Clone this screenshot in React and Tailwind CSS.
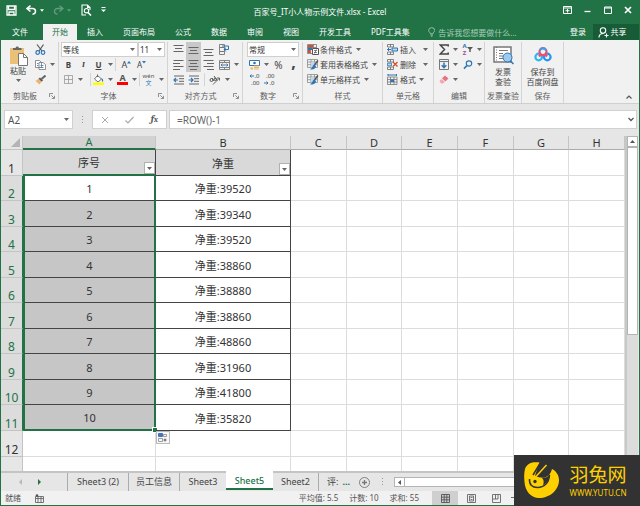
import { useState } from 'react';
import clsx from 'clsx';

const MENU = ['插入', '页面布局', '公式', '数据', '审阅', '视图', '开发工具', 'PDF工具集'];

const COLUMNS = ['A', 'B', 'C', 'D', 'E', 'F', 'G', 'H'];
const EMPTY = ['C', 'D', 'E', 'F', 'G', 'H'];

const WEIGHTS = [39520, 39340, 39520, 38860, 38880, 38860, 48860, 31960, 41800, 35820];

const SHEETS = [
  { name: 'Sheet3 (2)', width: 'w-[61px]' },
  { name: '员工信息', width: 'w-[51px]' },
  { name: 'Sheet3', width: 'w-[46px]' },
  { name: 'Sheet5', width: 'w-[47px]' },
  { name: 'Sheet2', width: 'w-[46px]' },
];

function Caret({ className }) {
  return (
    <svg viewBox="0 0 5 3" className={clsx('h-[3px] w-[5px] shrink-0', className)} fill="#666">
      <path d="M0 0h5L2.5 3z" />
    </svg>
  );
}

function Tool({ label, width = 'w-[15px]', active, children }) {
  return (
    <button
      type="button"
      aria-label={label}
      className={clsx('flex h-[15px] shrink-0 items-center justify-center', width, active && 'bg-[#c8c8c8]')}
    >
      {children}
    </button>
  );
}

function DropButton({ label }) {
  return (
    <button type="button" aria-label={label} className="flex h-[15px] w-[9px] shrink-0 items-center justify-center">
      <Caret />
    </button>
  );
}

function Divider() {
  return <span className="h-[13px] w-px shrink-0 bg-[#d4d4d4]" />;
}

function Combo({ label, width, value }) {
  return (
    <div className={clsx('relative', width)}>
      <select
        aria-label={label}
        className="h-[15px] w-full appearance-none border border-[#cfcfcf] bg-white pl-px leading-[13px] text-[#333]"
      >
        <option>{value}</option>
      </select>
      <Caret className="pointer-events-none absolute top-[6px] right-[3px]" />
    </div>
  );
}

function Group({ title, width, launcher, children }) {
  return (
    <section className={clsx('flex shrink-0 flex-col border-r border-[#d4d4d4]', width)}>
      <div className="h-[46px]">{children}</div>
      <div className="flex h-[15px] items-center">
        <span className="flex-1 text-center whitespace-nowrap text-[#5c5c5c]">{title}</span>
        {launcher && (
          <button type="button" aria-label={`${title}设置`} className="mr-[3px] flex h-[8px] w-[6px] items-center">
            <svg viewBox="0 0 6 6" className="h-[6px] w-[6px]" fill="none" stroke="#777" strokeWidth="0.8">
              <path d="M0.5 4V0.5H4M2.3 2.3l3 3M5.5 2.8v2.7H2.8" />
            </svg>
          </button>
        )}
      </div>
    </section>
  );
}

/* Lines used by the six alignment buttons */
function Lines({ at, side = 'center' }) {
  const x = { left: 0, center: 2, right: 4 }[side];
  return (
    <svg viewBox="0 0 11 12" className="h-[12px] w-[11px]" stroke="#666" strokeWidth="1">
      {at.map((y, i) => (
        <path key={y} d={i % 2 === 1 ? `M${x} ${y}h7` : `M0.5 ${y}h10`} />
      ))}
    </svg>
  );
}

function Indent({ flip }) {
  return (
    <svg viewBox="0 0 12 10" className="h-[10px] w-[12px]" fill="none">
      <path d="M1 1h10M6 3.7h5M6 6.3h5M1 9h10" stroke="#666" />
      <path d={flip ? 'M0.5 5h4M3 3l2 2-2 2' : 'M1 5h4M3 3L1 5l2 2'} stroke="#2f75b5" strokeWidth="1.2" />
    </svg>
  );
}

function TableBrush() {
  return (
    <svg viewBox="0 0 12 11" className="h-[11px] w-[12px] shrink-0" fill="none">
      <path d="M0.5 0.5h10v8h-10zM0.5 3h10M0.5 5.7h10M4 0.5v8M7.5 0.5v8" stroke="#8a8a8a" strokeWidth="0.8" />
      <path d="M4 3h3.5v5.5H4z" fill="#bdd7ee" />
      <path d="M11 1.5L7.5 6" stroke="#555" strokeWidth="1.5" />
      <path d="M7.5 5.5C5 6 6.5 8.5 3 10.2c3.5 .7 5.8 -.7 6 -3z" fill="#2f75b5" />
    </svg>
  );
}

function TitleBar() {
  return (
    <div className="relative flex h-[24px] items-center justify-between text-white">
      <div className="mb-[4px] flex items-center">
        <button type="button" aria-label="保存" className="ml-[5px]">
          <svg viewBox="0 0 11 11" className="h-[11px] w-[11px]" fill="none" stroke="#fff" strokeWidth="1.3">
            <path d="M1 1h9v9H1zM2.5 1v3.5h6V1M3 10V7h5v3" />
          </svg>
        </button>
        <button type="button" aria-label="撤销" className="ml-[9px] flex items-center gap-[3px]">
          <svg viewBox="0 0 11 10" className="h-[10px] w-[11px]" fill="none" stroke="#fff" strokeWidth="1.5">
            <path d="M4.5 0.7L1 3.5l3.5 3M1.5 3.5h5c4 0 4 5.5 0 5.7" />
          </svg>
          <svg viewBox="0 0 5 3" className="h-[3px] w-[4px]" fill="#fff"><path d="M0 0h5L2.5 3z" /></svg>
        </button>
        <button type="button" aria-label="恢复" className="ml-[9px] flex items-center gap-[3px] opacity-30">
          <svg viewBox="0 0 11 10" className="h-[10px] w-[11px]" fill="none" stroke="#fff" strokeWidth="1.3">
            <path d="M6.5 0.7L10 3.5l-3.5 3M9.5 3.5h-5c-4 0-4 5.5 0 5.7" />
          </svg>
          <svg viewBox="0 0 5 3" className="h-[3px] w-[4px]" fill="#fff"><path d="M0 0h5L2.5 3z" /></svg>
        </button>
        <button type="button" aria-label="打印预览" className="ml-[10px]">
          <svg viewBox="0 0 11 12" className="h-[12px] w-[11px]" fill="none" stroke="#fff" strokeWidth="1.1">
            <path d="M5 11H1V1h5.5L9 3.5V6M6.5 1v2.5H9" />
            <circle cx="5.5" cy="6.7" r="2.2" />
            <path d="M7 8.5l3 3" strokeWidth="1.6" />
          </svg>
        </button>
        <button type="button" aria-label="自定义快速访问工具栏" className="ml-[9px]">
          <svg viewBox="0 0 5 6" className="h-[6px] w-[5px]" fill="#fff"><path d="M0.5 0h4v1h-4zM0 2.5h5L2.5 5z" /></svg>
        </button>
      </div>
      <h1 className="absolute inset-x-0 top-[6px] text-center leading-[12px]">百家号_IT小人物示例文件.xlsx - Excel</h1>
      <div className="mb-[4px] flex items-center pr-[7px]">
        <button type="button" aria-label="功能区显示选项" className="mr-[12px]">
          <svg viewBox="0 0 9 8" className="h-[8px] w-[9px]" fill="none" stroke="#fff">
            <path d="M0.5 0.5h8v7h-8zM0.5 2h8M4.5 3v3.5M2.5 4.7h4" />
          </svg>
        </button>
        <button type="button" aria-label="最小化" className="mr-[13px]">
          <svg viewBox="0 0 7 8" className="h-[8px] w-[7px]" stroke="#fff" strokeWidth="1.3"><path d="M0.5 5.5h6" /></svg>
        </button>
        <button type="button" aria-label="最大化" className="mr-[12px]">
          <svg viewBox="0 0 8 8" className="h-[8px] w-[8px]" fill="none" stroke="#fff"><path d="M0.5 1h7v6.5h-7zM0.5 2h7" /></svg>
        </button>
        <button type="button" aria-label="关闭">
          <svg viewBox="0 0 8 8" className="h-[8px] w-[8px]" stroke="#fff" strokeWidth="1.7"><path d="M1 1l6 6M7 1L1 7" /></svg>
        </button>
      </div>
    </div>
  );
}

function MenuBar() {
  return (
    <nav className="flex h-[16px] text-white">
      <button type="button" className="w-[42px] pr-[4px]">文件</button>
      <button type="button" className="w-[34px] bg-[#f1f1f1] text-[#217346]">开始</button>
      <div className="flex">
        {MENU.map((name) => (
          <button key={name} type="button" className="px-[10px] whitespace-nowrap">{name}</button>
        ))}
      </div>
      <label className="flex flex-1 items-center gap-[3px] pl-[8px]">
        <svg viewBox="0 0 8 10" className="h-[10px] w-[8px]" fill="none" stroke="#a9cdb8" strokeWidth="0.9">
          <path d="M2.7 7c0-1.5-2-2-2-3.7a3.3 3 0 0 1 6.6 0C7.3 5 5.3 5.5 5.3 7zM2.7 8.3h2.6M3.2 9.5h1.6" />
        </svg>
        <input
          type="text"
          aria-label="告诉我您想要做什么"
          placeholder="告诉我您想要做什么..."
          className="h-[14px] w-full min-w-0 bg-transparent text-[#a9cdb8] outline-none placeholder:text-[#a9cdb8]"
        />
      </label>
      <button type="button" className="px-[7px]">登录</button>
      <button type="button" className="flex w-[46px] items-center justify-center gap-[2px] bg-[#185c37] pr-[8px]">
        <svg viewBox="0 0 11 11" className="h-[11px] w-[11px]" fill="none" stroke="#fff" strokeWidth="1.1">
          <circle cx="5" cy="3.5" r="2.7" />
          <path d="M1 10.5C1 7.5 3 6.5 5.5 6.5M8.5 6.5v4M6.5 8.5h4" />
        </svg>
        共享
      </button>
    </nav>
  );
}

function Ribbon() {
  return (
    <div className="flex h-[64px] border-b border-[#d0d0d0] bg-[#f1f1f1] pt-[2px]">
      <Group title="剪贴板" width="w-[58px]" launcher>
        <div className="flex">
          <button type="button" className="flex w-[32px] flex-col items-center pt-[3px] pl-[2px] leading-[10px] text-[#444]">
            <svg viewBox="0 0 19 21" className="h-[21px] w-[19px]">
              <path d="M1 3h14v16H1z" fill="#ebc177" />
              <path d="M4 5V3h2.500a1.800 1.800 0 0 1 3.500 0h2.500v2z" fill="#666" />
              <path d="M9.500 8.500h5l4 4v8h-9z" fill="#fff" stroke="#777" />
              <path d="M14.500 8.500v4h4" fill="none" stroke="#777" />
            </svg>
            粘贴
            <Caret className="mt-[3px]" />
          </button>
          <div className="flex flex-col">
            <Tool label="剪切">
              <svg viewBox="0 0 11 11" className="h-[11px] w-[11px]" fill="none">
                <path d="M2 0.5l5 6.5M8.5 0.5L4 7" stroke="#555" strokeWidth="1.2" />
                <circle cx="2.7" cy="8.5" r="1.8" stroke="#2f75b5" strokeWidth="1.2" />
                <circle cx="8" cy="8.5" r="1.8" stroke="#2f75b5" strokeWidth="1.2" />
              </svg>
            </Tool>
            <div className="flex">
              <Tool label="复制">
                <svg viewBox="0 0 11 10" className="h-[10px] w-[11px]" fill="#fff" stroke="#777" strokeWidth="0.8">
                  <path d="M0.5 0.5h4l2 2v5h-6zM4 2.5h4l2.5 2v5H4z" />
                  <path d="M5.5 5.5h3M5.5 7.5h3M2 3.5h1.5M2 5.5h1.5" stroke="#2f75b5" />
                </svg>
              </Tool>
              <DropButton label="复制选项" />
            </div>
            <Tool label="格式刷">
              <svg viewBox="0 0 11 10" className="h-[10px] w-[11px]">
                <path d="M10.5 0.5L6.5 4" stroke="#666" strokeWidth="2" />
                <path d="M5 2.5l3 3-1.5 1.3-3-3z" fill="#555" />
                <path d="M3.5 3.8l3 3-2 2.7L0.5 6z" fill="#edb56b" />
              </svg>
            </Tool>
          </div>
        </div>
      </Group>

      <Group title="字体" width="w-[109px]" launcher>
        <div className="flex pl-[2px]">
          <Combo label="字体" width="w-[77px]" value="等线" />
          <Combo label="字号" width="w-[27px]" value="11" />
        </div>
        <div className="flex items-center pl-[2px] text-[#444]">
          <Tool label="加粗"><span className="font-bold">B</span></Tool>
          <Tool label="倾斜"><span className="font-serif font-bold italic">I</span></Tool>
          <Tool label="下划线"><span className="font-bold underline">U</span></Tool>
          <DropButton label="下划线选项" />
          <Divider />
          <span className="w-[3px]" />
          <Tool label="增大字号">
            <span className="text-[9px]">A</span>
            <svg viewBox="0 0 4 8" className="h-[8px] w-[4px]" fill="#2f75b5"><path d="M0 2.5h4L2 0z" /></svg>
          </Tool>
          <Tool label="减小字号">
            <span>A</span>
            <svg viewBox="0 0 4 8" className="h-[8px] w-[4px]" fill="#2f75b5"><path d="M0 0h4L2 2.5z" /></svg>
          </Tool>
        </div>
        <div className="flex items-center pl-[2px]">
          <Tool label="边框">
            <svg viewBox="0 0 9 9" className="h-[9px] w-[9px]" fill="none" stroke="#999">
              <path d="M0.5 0.5h8v8h-8zM4.5 0.5v8M0.5 4.5h8" strokeWidth="0.8" />
            </svg>
          </Tool>
          <DropButton label="边框选项" />
          <span className="w-[5px]" />
          <Divider />
          <Tool label="填充颜色">
            <svg viewBox="0 0 11 11" className="h-[11px] w-[11px]">
              <path d="M4.5 1.5l4 3.5-3.500 3L1.500 5z" fill="#fff" stroke="#666" strokeWidth="0.9" />
              <path d="M4.5 3V0.5" stroke="#666" />
              <path d="M8.5 4c1.5 .5 2 2.5 1.5 4c-1 -.5 -1.5 -2 -1.5 -4z" fill="#2f75b5" />
              <path d="M0 8.500h11V11H0z" fill="#ffff00" />
            </svg>
          </Tool>
          <DropButton label="填充颜色选项" />
          <Tool label="字体颜色">
            <span className="border-b-3 border-[#ff0000] px-[2px] text-[9px] leading-[8px] font-bold text-[#555]">A</span>
          </Tool>
          <DropButton label="字体颜色选项" />
          <Divider />
          <Tool label="拼音" width="w-[17px]">
            <span className="flex flex-col items-center text-[6px] leading-[7px] text-[#555]">
              wén<span className="text-[#2f75b5]">文</span>
            </span>
          </Tool>
          <DropButton label="拼音选项" />
        </div>
      </Group>

      <Group title="对齐方式" width="w-[75px]" launcher>
        <div className="flex items-center pl-[3px]">
          <Tool label="顶端对齐"><Lines at={[1.5, 4.5, 7.5]} /></Tool>
          <Tool label="垂直居中" active><Lines at={[3.5, 6.5, 9.5]} /></Tool>
          <Tool label="底端对齐"><Lines at={[5.5, 8.5, 11.5]} /></Tool>
          <Tool label="自动换行" width="w-[16px]">
            <svg viewBox="0 0 11 11" className="h-[11px] w-[11px]" fill="none">
              <path d="M0.5 0.5h5v3h-5zM0.5 3.5h5v4h-5zM0.5 7.5h5v3h-5z" stroke="#777" strokeWidth="0.9" />
              <path d="M3 2h6.5v3.5H5M7 3.7L5 5.5l2 2" stroke="#2f75b5" />
            </svg>
          </Tool>
        </div>
        <div className="flex items-center pl-[3px]">
          <Tool label="左对齐"><Lines at={[1.5, 4.5, 7.5, 10.5]} side="left" /></Tool>
          <Tool label="居中" active><Lines at={[1.5, 4.5, 7.5, 10.5]} /></Tool>
          <Tool label="右对齐"><Lines at={[1.5, 4.5, 7.5, 10.5]} side="right" /></Tool>
          <Tool label="合并后居中" width="w-[16px]">
            <svg viewBox="0 0 11 10" className="h-[10px] w-[11px]" fill="none">
              <path d="M0.5 0.5h10v9h-10zM0.5 2.5h10M0.5 7.5h10M5.5 0.5v2M5.5 7.5v2" stroke="#777" strokeWidth="0.9" />
              <path d="M2 5h7M3.5 3.7L2 5l1.5 1.3M7.5 3.7L9 5 7.5 6.3" stroke="#2f75b5" strokeWidth="0.9" />
            </svg>
          </Tool>
          <DropButton label="合并选项" />
        </div>
        <div className="flex items-center pl-[3px]">
          <Tool label="减少缩进量"><Indent /></Tool>
          <Tool label="增加缩进量"><Indent flip /></Tool>
          <span className="w-[3px]" />
          <Divider />
          <Tool label="方向" width="w-[18px]">
            <svg viewBox="0 0 11 10" className="h-[10px] w-[11px]" fill="none" stroke="#555">
              <circle cx="2.5" cy="5" r="1.5" />
              <path d="M3 3l2 3M5 1l3 4.5" />
              <circle cx="6.3" cy="4.3" r="1.2" />
              <path d="M4 9.5l6-6M8 3h2.5v2.5" strokeWidth="0.9" />
            </svg>
          </Tool>
          <DropButton label="方向选项" />
        </div>
      </Group>

      <Group title="数字" width="w-[60px]" launcher>
        <div className="flex pl-[4px]">
          <Combo label="数字格式" width="w-[52px]" value="常规" />
        </div>
        <div className="flex items-center pl-[4px] text-[#444]">
          <Tool label="会计数字格式">
            <svg viewBox="0 0 11 10" className="h-[10px] w-[11px]">
              <path d="M0.5 0.5h10v5h-10z" fill="#fff" stroke="#2f75b5" />
              <circle cx="5.5" cy="3" r="1.3" fill="#2f75b5" />
              <path d="M5 5.5h5v1H5zM5 7h5v1H5zM5 8.5h5v1H5zM1.5 7.5H4v2H1.5z" fill="#edb56b" />
            </svg>
          </Tool>
          <DropButton label="会计格式选项" />
          <Tool label="百分比"><span className="text-[10px]">%</span></Tool>
          <Tool label="千位分隔"><span className="pb-[6px] text-[16px] leading-[8px] font-bold">,</span></Tool>
        </div>
        <div className="flex items-center pl-[4px] text-[#444]">
          <Tool label="增加小数位数">
            <span className="flex flex-col items-end text-[6px] leading-[7px]">
              <span className="flex items-center">
                <svg viewBox="0 0 5 4" className="h-[4px] w-[5px]" fill="none" stroke="#2f75b5"><path d="M5 2H1M2.500 0.500L1 2l1.500 1.500" /></svg>
                .0
              </span>
              <span>.00</span>
            </span>
          </Tool>
          <Tool label="减少小数位数">
            <span className="flex flex-col items-end text-[6px] leading-[7px]">
              <span>.00</span>
              <span className="flex items-center">
                <svg viewBox="0 0 5 4" className="h-[4px] w-[5px]" fill="none" stroke="#2f75b5"><path d="M0 2h4M2.500 0.500L4 2 2.500 3.500" /></svg>
                .0
              </span>
            </span>
          </Tool>
        </div>
      </Group>

      <Group title="样式" width="w-[80px]">
        <div className="flex flex-col items-start pl-[4px] text-[#444]">
          <button type="button" className="flex h-[15px] items-center gap-px whitespace-nowrap">
            <svg viewBox="0 0 12 11" className="h-[11px] w-[12px] shrink-0" fill="none">
              <path d="M0.5 0.5h9v9h-9zM3.5 0.5v9M6.5 0.5v9M0.5 3.5h9" stroke="#777" strokeWidth="0.8" />
              <path d="M1 1h5v2.5H1zM1 6h2.5v3H1z" fill="#d9512c" />
              <path d="M1 3.5h4V6H1z" fill="#2f75b5" />
              <path d="M5.5 4.5h6v6h-6z" fill="#fff" stroke="#555" />
              <path d="M7 6.5h3M7 8.5h3M9.5 5.5l-2 4" stroke="#555" strokeWidth="0.7" />
            </svg>
            条件格式
            <Caret className="ml-[3px]" />
          </button>
          <button type="button" className="flex h-[15px] items-center gap-px whitespace-nowrap">
            <TableBrush />
            套用表格格式
            <Caret className="ml-[3px]" />
          </button>
          <button type="button" className="flex h-[15px] items-center gap-px whitespace-nowrap">
            <TableBrush />
            单元格样式
            <Caret className="ml-[3px]" />
          </button>
        </div>
      </Group>

      <Group title="单元格" width="w-[51px]">
        <div className="flex flex-col pl-[4px] text-[#444]">
          <button type="button" className="flex h-[15px] items-center gap-[2px]">
            <svg viewBox="0 0 11 11" className="h-[11px] w-[11px]" fill="none">
              <path d="M0.5 0.5h6v2.5h-6zM0.5 8h6v2.5h-6zM3.5 0.5V3M3.5 8v2.5" stroke="#777" strokeWidth="0.9" />
              <path d="M5 4h5.5v3H5z" fill="#bdd7ee" stroke="#2f75b5" />
              <path d="M4 5.5H0.5M2 4L0.5 5.5 2 7" stroke="#2f75b5" />
            </svg>
            插入
            <Caret className="ml-[5px]" />
          </button>
          <button type="button" className="flex h-[15px] items-center gap-[2px]">
            <svg viewBox="0 0 11 11" className="h-[11px] w-[11px]" fill="none">
              <path d="M0.5 0.5h6v2.5h-6zM0.5 8h6v2.5h-6zM3.5 0.5V3M3.5 8v2.5" stroke="#777" strokeWidth="0.9" />
              <path d="M0.5 4.2h4v2.6h-4z" fill="#bdd7ee" stroke="#2f75b5" strokeWidth="0.8" />
              <path d="M6 3l4.5 4.5M10.5 3L6 7.5" stroke="#d9512c" strokeWidth="1.3" />
            </svg>
            删除
            <Caret className="ml-[5px]" />
          </button>
          <button type="button" className="flex h-[15px] items-center gap-[2px]">
            <svg viewBox="0 0 11 11" className="h-[11px] w-[11px]" fill="none">
              <path d="M0.5 3h9.500v7.500H0.500zM0.500 5.500H10M0.500 8H10M3.500 3v7.500M7 3v7.500" stroke="#777" strokeWidth="0.8" />
              <path d="M3.5 5.5H7V8H3.5z" fill="#2f75b5" />
              <path d="M1 1h8.5M1 0v2M9.5 0v2" stroke="#2f75b5" />
            </svg>
            格式
            <Caret className="ml-px" />
          </button>
        </div>
      </Group>

      <Group title="编辑" width="w-[51px]">
        <div className="flex items-center pl-[2px]">
          <Tool label="自动求和">
            <svg viewBox="0 0 10 11" className="h-[11px] w-[10px]" fill="none" stroke="#444" strokeWidth="1.5">
              <path d="M9.2 2.5V1H1.2l4.3 4.5L1.2 10h8V8.5" />
            </svg>
          </Tool>
          <DropButton label="求和选项" />
          <Tool label="排序和筛选">
            <span className="flex flex-col text-[6px] leading-[7px] font-bold">
              <span className="text-[#2f75b5]">A</span>
              <span className="text-[#9b4f96]">Z</span>
            </span>
            <svg viewBox="0 0 6 7" className="h-[7px] w-[6px]" fill="#555"><path d="M0 1h6L3.7 3.5V6H2.3V3.5z" /></svg>
          </Tool>
          <DropButton label="排序选项" />
        </div>
        <div className="flex items-center pl-[2px]">
          <Tool label="填充">
            <svg viewBox="0 0 10 11" className="h-[11px] w-[10px]" fill="none">
              <path d="M0.5 0.5h9v10h-9zM0.5 2.5h9" stroke="#777" />
              <path d="M5 3.5v5M2.7 6.3L5 8.7l2.3-2.4" stroke="#2f75b5" strokeWidth="1.5" />
            </svg>
          </Tool>
          <DropButton label="填充选项" />
          <Tool label="查找和选择">
            <svg viewBox="0 0 10 10" className="h-[10px] w-[10px]" fill="none" stroke="#2f75b5">
              <circle cx="6" cy="3.5" r="2.7" strokeWidth="1.2" />
              <path d="M4 5.5L1 8.7" strokeWidth="1.7" />
            </svg>
          </Tool>
          <DropButton label="查找选项" />
        </div>
        <div className="flex items-center pl-[2px]">
          <Tool label="清除">
            <svg viewBox="0 0 10 9" className="h-[9px] w-[10px]">
              <path d="M6 0.5L9.5 3.5 6.3 6.5 3 3.3z" fill="#e8728a" />
              <path d="M2.5 3.9l3.2 3L4 8.5H2L0.5 6z" fill="#f2a5b3" />
            </svg>
          </Tool>
          <DropButton label="清除选项" />
        </div>
      </Group>

      <Group title="发票查验" width="w-[37px]">
        <button type="button" className="flex w-full flex-col items-center pt-[4px] leading-[10px] text-[#444]">
          <svg viewBox="0 0 21 19" className="mb-[2px] h-[19px] w-[21px]" fill="none">
            <path d="M1 1h17v15H1z" fill="#fff" stroke="#777" strokeWidth="1.5" />
            <path d="M3.5 1v15" stroke="#777" strokeDasharray="1 1.5" />
            <path d="M6 4.5h9M6 7.5h4M6 10h4M6 12.5h4" stroke="#777" strokeWidth="1.2" />
            <circle cx="14.5" cy="11.5" r="4.5" fill="#9cc9f0" stroke="#2f75b5" />
            <path d="M17.5 15l3 3" stroke="#2f75b5" strokeWidth="1.5" />
          </svg>
          <span>发票</span>
          <span>查验</span>
        </button>
      </Group>

      <Group title="保存" width="w-[42px]">
        <button type="button" className="flex w-full flex-col items-center pt-[5px] leading-[10px] whitespace-nowrap text-[#444]">
          <svg viewBox="0 0 18 15" className="mb-[5px] h-[15px] w-[18px]" fill="none" strokeWidth="2.2">
            <circle cx="4.7" cy="10" r="3.3" stroke="#29b6f6" />
            <circle cx="13.3" cy="10" r="3.3" stroke="#2196f3" />
            <circle cx="9" cy="4.7" r="3.5" stroke="#f0506e" />
            <path d="M5.8 3.5A3.5 3.5 0 0 1 12.2 3.5" stroke="#3aa0ee" />
            <path d="M6.5 7.5l-1.5 2M11.5 7.5l1.5 2" stroke="#f0506e" />
          </svg>
          <span>保存到</span>
          <span>百度网盘</span>
        </button>
      </Group>

      <div className="flex flex-1 items-end justify-end pr-[7px] pb-[4px]">
        <button type="button" aria-label="折叠功能区">
          <svg viewBox="0 0 6 4" className="h-[4px] w-[6px]" fill="none" stroke="#555" strokeWidth="1.2"><path d="M0.5 3.5L3 1l2.5 2.5" /></svg>
        </button>
      </div>
    </div>
  );
}

function FormulaBar({ value, onChange }) {
  return (
    <div className="flex h-[32px] items-start pt-[6px] pr-[2px] pl-[3px] text-[10px]">
      <div className="relative w-[69px]">
        <input
          aria-label="名称框"
          defaultValue="A2"
          className="h-[19px] w-full border border-[#d0d0d0] bg-white pl-[3px] text-[#555]"
        />
        <Caret className="absolute top-[8px] right-[4px]" />
      </div>
      <span className="flex h-[19px] w-[19px] items-center justify-center">
        <svg viewBox="0 0 2 8" className="h-[8px] w-[2px]" fill="#999"><path d="M0 0h1v1H0zM0 3h1v1H0zM0 6h1v1H0z" /></svg>
      </span>
      <div className="flex h-[19px] w-[75px] items-center justify-around border border-[#d0d0d0] bg-white">
        <button type="button" aria-label="取消">
          <svg viewBox="0 0 8 8" className="h-[8px] w-[8px]" stroke="#aaa"><path d="M1 1l6 6M7 1L1 7" /></svg>
        </button>
        <button type="button" aria-label="输入">
          <svg viewBox="0 0 9 8" className="h-[8px] w-[9px]" fill="none" stroke="#aaa" strokeWidth="1.2"><path d="M0.5 4.5L3 7l5.5-6" /></svg>
        </button>
        <button type="button" aria-label="插入函数" className="font-serif leading-[12px] font-bold text-[#555] italic">
          f<span className="text-[8px]">x</span>
        </button>
      </div>
      <div className="relative ml-[2px] flex-1">
        <input
          aria-label="编辑栏"
          value={value}
          onChange={(e) => onChange(e.target.value)}
          className="h-[19px] w-full border border-[#d0d0d0] bg-white pl-[7px] text-[#666]"
        />
        <svg viewBox="0 0 6 5" className="absolute top-[7px] right-[3px] h-[5px] w-[6px]" fill="none" stroke="#555" strokeWidth="1.3">
          <path d="M0.5 1L3 3.5 5.5 1" />
        </svg>
      </div>
    </div>
  );
}

function FilterButton({ label }) {
  return (
    <button
      type="button"
      aria-label={`筛选${label}`}
      className="absolute right-0 bottom-0 flex h-[12px] w-[11px] items-center justify-center border border-[#b0b0b0] bg-white"
    >
      <Caret />
    </button>
  );
}

function Grid() {
  const rowHead = 'border-r border-b border-[#c4c4c4] p-0 text-center align-bottom text-[12px] leading-[13px] font-normal';
  const empty = 'border-r border-b border-[#dcdcdc] p-0';

  return (
    <table className="w-full table-fixed border-separate border-spacing-0 bg-white text-[11px] leading-[14px] text-[#333]">
      <colgroup>
        <col className="w-[22px]" />
        <col className="w-[133px]" />
        <col className="w-[135px]" />
        {EMPTY.map((c) => <col key={c} />)}
      </colgroup>
      <thead>
        <tr className="h-[14px] bg-[#e6e6e6] leading-[12px]">
          <th className="border-r border-b border-[#c4c4c4] p-0">
            <svg viewBox="0 0 9 9" className="mr-[2px] ml-auto h-[9px] w-[9px]" fill="#b4b4b4"><path d="M9 0v9H0z" /></svg>
          </th>
          {COLUMNS.map((c) => (
            <th
              key={c}
              className={clsx(
                'border-r p-0 align-bottom font-normal',
                c === 'A' ? 'border-b-2 border-r-[#c4c4c4] border-b-[#217346] bg-[#d2d2d2] text-[#217346]' : 'border-b border-r-[#c4c4c4] border-b-[#ababab]'
              )}
            >
              {c}
            </th>
          ))}
        </tr>
      </thead>
      <tbody>
        <tr className="h-[26px]">
          <th className={clsx(rowHead, 'bg-[#e6e6e6]')}>1</th>
          <td className="relative border-r border-b-2 border-r-[#444] border-b-[#217346] bg-[#d9d9d9] p-0 pt-[2px] text-center">
            序号
            <FilterButton label="序号" />
          </td>
          <td className="relative border-r border-b border-[#444] bg-[#d9d9d9] p-0 pt-[2px] text-center">
            净重
            <FilterButton label="净重" />
          </td>
          {EMPTY.map((c) => <td key={c} className={empty} />)}
        </tr>
        {WEIGHTS.map((weight, i) => {
          const last = i === WEIGHTS.length - 1;
          return (
            <tr key={i} className="odd:h-[26px] even:h-[25px]">
              <th className={clsx(rowHead, 'border-r-[#217346] bg-[#dcdcdc] text-[#217346]')}>{i + 2}</th>
              <td
                className={clsx(
                  'relative border-x-2 border-x-[#217346] p-0 pt-[2px] text-center',
                  i === 0 ? 'bg-white' : 'bg-[#c6c6c6]',
                  last ? 'border-b-2 border-b-[#217346]' : 'border-b border-b-[#444]'
                )}
              >
                {i + 1}
                {last && <span className="absolute -right-[3px] -bottom-[3px] h-[4px] w-[4px] bg-[#217346] outline outline-white" />}
              </td>
              <td className="relative border-r border-b border-[#444] p-0 pt-[2px] text-center">
                净重:{weight}
                {last && (
                  <button
                    type="button"
                    aria-label="自动填充选项"
                    className="absolute top-[26px] left-0 flex h-[13px] w-[14px] items-center justify-center border border-[#bbb] bg-[#f7f7f7]"
                  >
                    <svg viewBox="0 0 10 9" className="h-[9px] w-[10px]" fill="none">
                      <path d="M0.5 0.5h4v3h-4z" fill="#4472c4" stroke="#4472c4" />
                      <path d="M5.5 1.5h3v2h-3zM0.5 5.5h4v3h-4z" stroke="#888" strokeWidth="0.8" />
                      <path d="M5.5 7h3M7 5.5v3" stroke="#555" />
                    </svg>
                  </button>
                )}
              </td>
              {EMPTY.map((c) => <td key={c} className={empty} />)}
            </tr>
          );
        })}
        <tr className="h-[26px]">
          <th className={clsx(rowHead, 'bg-[#e6e6e6]')}>12</th>
          <td className={empty} />
          <td className={empty} />
          {EMPTY.map((c) => <td key={c} className={empty} />)}
        </tr>
        <tr className="h-[14px]">
          <th className="border-r border-[#c4c4c4] bg-[#e6e6e6] p-0" />
          <td className="border-r border-[#dcdcdc] p-0" />
          <td className="border-r border-[#dcdcdc] p-0" />
          {EMPTY.map((c) => <td key={c} className="border-r border-[#dcdcdc] p-0" />)}
        </tr>
      </tbody>
    </table>
  );
}

function SheetTabs({ active, onSelect }) {
  return (
    <div className="flex h-[20px] items-stretch border-t-2 border-[#c4c4c4] text-[9px] text-[#444]">
      <div className="flex w-[67px] items-center border-r border-[#ababab] pl-[18px]">
        <button type="button" aria-label="上一张">
          <svg viewBox="0 0 3 6" className="h-[6px] w-[3px]" fill="#b8b8b8"><path d="M3 0v6L0 3z" /></svg>
        </button>
        <button type="button" aria-label="下一张" className="ml-[16px]">
          <svg viewBox="0 0 3 6" className="h-[6px] w-[3px]" fill="#217346"><path d="M0 0v6l3-3z" /></svg>
        </button>
      </div>
      {SHEETS.map(({ name, width }, i) => (
        <button
          key={name}
          type="button"
          onClick={() => onSelect(name)}
          className={clsx(
            'flex items-center justify-center whitespace-nowrap',
            width,
            name === active && '-mt-[2px] mb-px border-b-2 border-[#217346] bg-white pt-[3px] font-medium text-[#217346]',
            (i < 2 || i === 4) && 'border-r border-[#ababab]'
          )}
        >
          {name}
        </button>
      ))}
      <button type="button" className="ml-[8px] whitespace-nowrap">评:</button>
      <button type="button" className="ml-[4px] font-bold text-[#217346]">...</button>
      <button type="button" aria-label="新工作表" className="ml-[9px] flex items-center">
        <svg viewBox="0 0 11 11" className="h-[11px] w-[11px]" fill="none" stroke="#777">
          <circle cx="5.5" cy="5.5" r="5" strokeWidth="0.9" />
          <path d="M5.5 3v5M3 5.5h5" strokeWidth="1.3" />
        </svg>
      </button>
      <span className="flex w-[24px] items-center justify-center">
        <svg viewBox="0 0 1 8" className="h-[8px] w-px" fill="#999"><path d="M0 0h1v1H0zM0 3h1v1H0zM0 6h1v1H0z" /></svg>
      </span>
      <div className="mr-[12px] flex h-[10px] flex-1 self-center border border-[#b4b4b4] bg-white">
        <button type="button" aria-label="向左滚动" className="flex w-[10px] items-center justify-center border-r border-[#b4b4b4]">
          <svg viewBox="0 0 3 5" className="h-[5px] w-[3px]" fill="#555"><path d="M3 0v5L0 2.5z" /></svg>
        </button>
      </div>
    </div>
  );
}

function StatusBar() {
  return (
    <footer className="flex h-[14px] items-center bg-[#f1f1f1] text-[#555]">
      <span className="ml-[4px]">就绪</span>
      <svg viewBox="0 0 9 9" className="ml-[14px] h-[9px] w-[9px]" fill="none" stroke="#666">
        <path d="M0.5 2.5h8v6h-8zM0.5 4.5h8M3 2.5v6M6 2.5v6" strokeWidth="0.9" />
        <circle cx="2" cy="1.5" r="1.3" fill="#555" stroke="none" />
      </svg>
      <div className="ml-auto flex gap-[11px]">
        <span>平均值: 5.5</span>
        <span>计数: 10</span>
        <span>求和: 55</span>
      </div>
      <div className="mr-[120px] ml-[13px] flex h-full items-center">
        <button type="button" aria-label="普通" className="flex h-full w-[26px] items-center justify-center bg-[#cfcfcf]">
          <svg viewBox="0 0 9 9" className="h-[9px] w-[9px]" fill="none" stroke="#555"><path d="M0.5 0.5h8v8h-8zM3.2 0.5v8M5.8 0.5v8M0.5 3.2h8M0.5 5.8h8" strokeWidth="0.9" /></svg>
        </button>
        <button type="button" aria-label="页面布局视图" className="flex w-[26px] items-center justify-center">
          <svg viewBox="0 0 9 9" className="h-[9px] w-[9px]" fill="none" stroke="#666"><path d="M0.5 0.5h8v8h-8zM2.5 2h4v5h-4zM3.5 3.5h2M3.5 5.5h2" strokeWidth="0.9" /></svg>
        </button>
        <button type="button" aria-label="分页预览" className="flex w-[25px] items-center justify-center">
          <svg viewBox="0 0 9 9" className="h-[9px] w-[9px]" fill="none" stroke="#666"><path d="M0.5 0.5h8v8h-8zM3.5 0.5v4.5M6 0.5v4.5M0.5 5h5.5" strokeWidth="0.9" /></svg>
        </button>
        <button type="button" aria-label="缩小" className="flex w-[10px] items-center justify-center">
          <svg viewBox="0 0 6 2" className="h-[2px] w-[6px]" fill="#666"><path d="M0 0h6v1H0z" /></svg>
        </button>
      </div>
    </footer>
  );
}

function SiteBadge() {
  return (
    <a
      href="#yutu"
      className="absolute right-0 bottom-0 -mr-px -mb-px flex h-[51px] w-[126px] items-center bg-[#323232] pl-[10px] text-[#ffd000]"
    >
      <svg viewBox="0 0 35 37" className="h-[37px] w-[35px]" fill="none">
        <path
          d="M15.5 0.5C9 -0.5 3 1 1 7C0 11 0 15 0.500 20C1 29 7 36 15 36C26 36 35 28 35 18C35 13 32 9 28 7C27 11 25 14 21 15.500C18 16 14 15.500 11 13.500Z"
          fill="#ffd000"
        />
        <path d="M16 1.500L9 13" stroke="#323232" strokeWidth="1.500" />
        <path d="M22.500 3L12 14.500" stroke="#ffd000" strokeWidth="1.500" />
        <path d="M5.500 17C5 23 8.500 25.500 13.500 25.500C20 25.500 25 21 25.500 13" stroke="#323232" strokeWidth="1.500" />
        <path d="M18 16C21 16 24 15 25.500 12L25 16C24 19 22 22 19 23C20 20 20 18 18 16Z" fill="#323232" />
        <circle cx="11" cy="19.500" r="1.700" fill="#323232" />
      </svg>
      <span className="ml-[9px] flex w-[60px] flex-col items-center pt-[2px]">
        <span className="text-[19px] leading-[22px] whitespace-nowrap">羽兔网</span>
        <span className="text-[8px] leading-[13px]">WWW.YUTU.CN</span>
      </span>
    </a>
  );
}

export default function App() {
  const [formula, setFormula] = useState('=ROW()-1');
  const [sheet, setSheet] = useState('Sheet5');

  return (
    <div className="relative w-full border-x border-b border-[#217346] bg-[#e6e6e6] font-['Noto_Sans','Noto_Sans_CJK_SC',sans-serif] text-[8px] leading-[12px]">
      <header className="bg-[#217346]">
        <TitleBar />
        <MenuBar />
      </header>
      <Ribbon />
      <FormulaBar value={formula} onChange={setFormula} />
      <main className="flex">
        <div className="min-w-0 flex-1">
          <Grid />
        </div>
        <div className="flex w-[14px] flex-col border-l-2 border-[#c8c8c8] pr-px">
          <div className="flex flex-1 flex-col bg-[#dcdcdc]">
            <button type="button" aria-label="向上滚动" className="flex h-[11px] items-center justify-center border border-[#b4b4b4] bg-white">
              <svg viewBox="0 0 5 3" className="h-[3px] w-[5px]" fill="#555"><path d="M0 3h5L2.5 0z" /></svg>
            </button>
            <div className="h-[188px] border border-[#b4b4b4] bg-white" />
          </div>
        </div>
      </main>
      <SheetTabs active={sheet} onSelect={setSheet} />
      <StatusBar />
      <SiteBadge />
    </div>
  );
}
